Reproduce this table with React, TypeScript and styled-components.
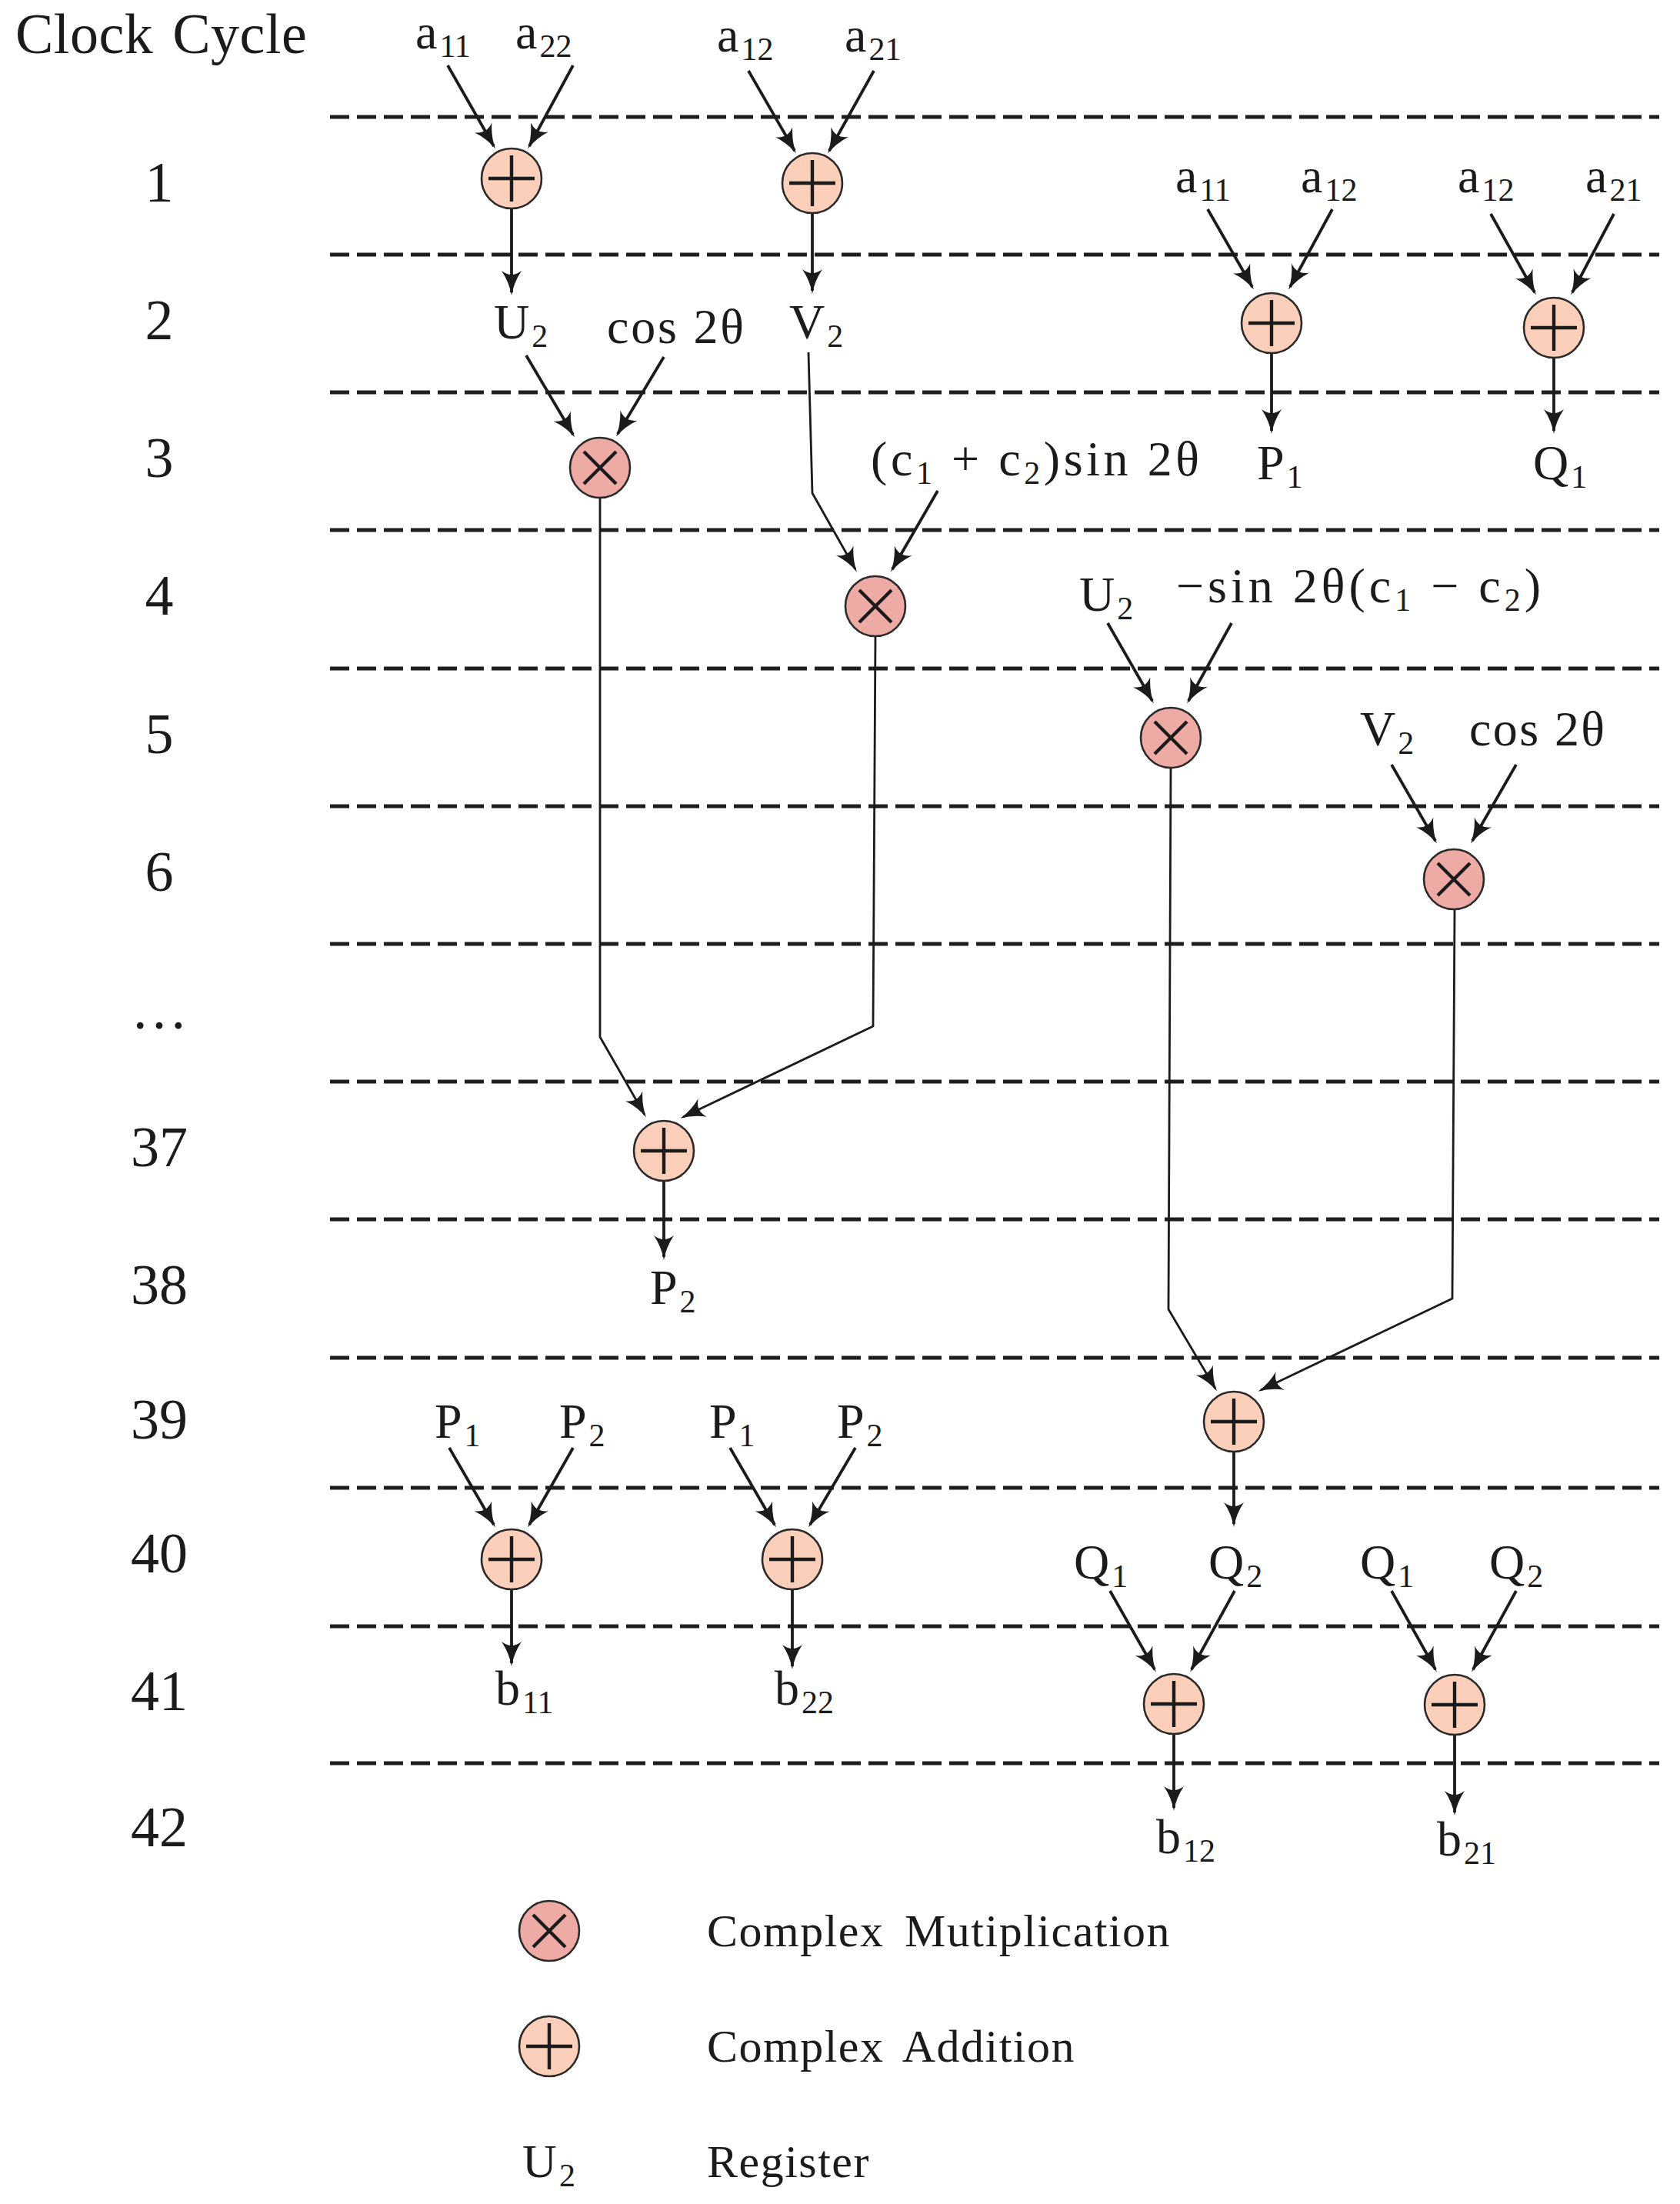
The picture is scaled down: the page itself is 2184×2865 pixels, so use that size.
import React from 'react';
import styled, { createGlobalStyle } from 'styled-components';

const INK = '#1b1b1b';

const GlobalStyle = createGlobalStyle`
	html,
	body {
		margin: 0;
		padding: 0;
		background: #ffffff;
	}

	body {
		font-family: 'Liberation Serif', 'DejaVu Serif', serif;
		color: ${INK};
	}
`;

// y of every dashed separator, top to bottom
const LINES = [152, 331, 510, 689, 869, 1048, 1227, 1406, 1585, 1765, 1934, 2114, 2292];
const CYCLES = ['1', '2', '3', '4', '5', '6', '…', '37', '38', '39', '40', '41', '42'];
const ROW_HEIGHTS = CYCLES.map((_, i) => (i < LINES.length - 1 ? LINES[i + 1] - LINES[i] : 176));

type Op = 'add' | 'mul';

const NODES: { id: string; op: Op; x: number; y: number }[] = [
	{ id: 'A', op: 'add', x: 665, y: 232 },
	{ id: 'B', op: 'add', x: 1056, y: 238 },
	{ id: 'C', op: 'add', x: 1653, y: 420 },
	{ id: 'D', op: 'add', x: 2020, y: 426 },
	{ id: 'E', op: 'mul', x: 780, y: 608 },
	{ id: 'F', op: 'mul', x: 1138, y: 788 },
	{ id: 'G', op: 'mul', x: 1522, y: 959 },
	{ id: 'H', op: 'mul', x: 1890, y: 1143 },
	{ id: 'I', op: 'add', x: 863, y: 1496 },
	{ id: 'J', op: 'add', x: 1604, y: 1848 },
	{ id: 'K', op: 'add', x: 665, y: 2027 },
	{ id: 'L', op: 'add', x: 1030, y: 2027 },
	{ id: 'M', op: 'add', x: 1526, y: 2215 },
	{ id: 'N', op: 'add', x: 1891, y: 2216 },
];

// short arrows: [x1, y1, x2, y2]
const ARROWS: number[][] = [
	[582, 85, 642, 190],
	[745, 85, 688, 190],
	[973, 92, 1033, 196],
	[1136, 92, 1078, 196],
	[665, 271, 665, 380],
	[1056, 277, 1056, 378],
	[684, 462, 745, 565],
	[863, 464, 803, 564],
	[1219, 638, 1160, 740],
	[1570, 272, 1628, 373],
	[1732, 272, 1677, 373],
	[1938, 278, 1995, 380],
	[2098, 278, 2044, 380],
	[1653, 459, 1653, 560],
	[2020, 465, 2020, 560],
	[1440, 810, 1498, 911],
	[1601, 810, 1545, 911],
	[1809, 994, 1866, 1093],
	[1971, 994, 1914, 1093],
	[863, 1535, 863, 1634],
	[584, 1882, 642, 1982],
	[745, 1882, 688, 1982],
	[949, 1882, 1007, 1982],
	[1112, 1882, 1053, 1982],
	[665, 2066, 665, 2162],
	[1030, 2066, 1030, 2166],
	[1604, 1887, 1604, 1981],
	[1443, 2068, 1501, 2170],
	[1605, 2068, 1549, 2170],
	[1809, 2068, 1866, 2170],
	[1971, 2068, 1915, 2170],
	[1526, 2254, 1526, 2350],
	[1891, 2255, 1891, 2356],
];

// long routed connections between stages
const ROUTES = [
	'M1051 458 L1056 641 L1112 740',
	'M780 647 L780 1348 L838 1449',
	'M1138 827 L1135 1334 L888 1452',
	'M1522 998 L1519 1702 L1580 1805',
	'M1891 1182 L1888 1688 L1639 1807',
];

const LABELS: { x: number; y: number; base: string; sub?: string }[] = [
	{ x: 540, y: 63, base: 'a', sub: '11' },
	{ x: 670, y: 63, base: 'a', sub: '22' },
	{ x: 932, y: 67, base: 'a', sub: '12' },
	{ x: 1098, y: 67, base: 'a', sub: '21' },
	{ x: 642, y: 440, base: 'U', sub: '2' },
	{ x: 1026, y: 440, base: 'V', sub: '2' },
	{ x: 1528, y: 250, base: 'a', sub: '11' },
	{ x: 1691, y: 250, base: 'a', sub: '12' },
	{ x: 1895, y: 250, base: 'a', sub: '12' },
	{ x: 2061, y: 250, base: 'a', sub: '21' },
	{ x: 1634, y: 623, base: 'P', sub: '1' },
	{ x: 1993, y: 623, base: 'Q', sub: '1' },
	{ x: 1403, y: 794, base: 'U', sub: '2' },
	{ x: 1768, y: 969, base: 'V', sub: '2' },
	{ x: 845, y: 1695, base: 'P', sub: '2' },
	{ x: 565, y: 1869, base: 'P', sub: '1' },
	{ x: 727, y: 1869, base: 'P', sub: '2' },
	{ x: 922, y: 1869, base: 'P', sub: '1' },
	{ x: 1088, y: 1869, base: 'P', sub: '2' },
	{ x: 644, y: 2216, base: 'b', sub: '11' },
	{ x: 1007, y: 2216, base: 'b', sub: '22' },
	{ x: 1396, y: 2052, base: 'Q', sub: '1' },
	{ x: 1571, y: 2052, base: 'Q', sub: '2' },
	{ x: 1768, y: 2052, base: 'Q', sub: '1' },
	{ x: 1936, y: 2052, base: 'Q', sub: '2' },
	{ x: 1503, y: 2409, base: 'b', sub: '12' },
	{ x: 1868, y: 2412, base: 'b', sub: '21' },
];

const SUB_DROP = 11;

const Page = styled.div`
	width: 2184px;
	min-height: 2865px;
	display: flex;
	flex-direction: column;
`;

const Figure = styled.div`
	display: grid;
	grid-template-columns: 414px 1770px;
`;

const CycleColumn = styled.div`
	display: flex;
	flex-direction: column;
`;

const CycleHeader = styled.div`
	height: 152px;
	box-sizing: border-box;
	padding: 7px 0 0 20px;
	font-size: 74px;
	line-height: 1;
	letter-spacing: 0.5px;
	white-space: nowrap;
	word-spacing: 6px;
`;

const CycleRow = styled.div<{ $h: number }>`
	height: ${(p) => p.$h}px;
	box-sizing: border-box;
	padding-bottom: 10px;
	display: flex;
	align-items: center;
	justify-content: center;
	font-size: 74px;
	line-height: 1;
`;

const Diagram = styled.svg`
	display: block;
	width: 1770px;
	height: 2468px;
`;

const Dash = styled.line`
	stroke: #1e1e1e;
	stroke-width: 4.8;
	stroke-dasharray: 25 10;
`;

const Wire = styled.path<{ $w?: number }>`
	fill: none;
	stroke: ${INK};
	stroke-width: ${(p) => p.$w ?? 3.8};
	stroke-linejoin: round;
`;

const Disc = styled.circle<{ $op: Op }>`
	fill: ${(p) => (p.$op === 'add' ? '#fbcfb9' : '#eeaaa5')};
	stroke: #2a2a2a;
	stroke-width: 2.6;
`;

const Stroke = styled.path`
	fill: none;
	stroke: ${INK};
	stroke-width: 4.4;
`;

const LabelText = styled.text`
	font-family: 'Liberation Serif', 'DejaVu Serif', serif;
	font-size: 64px;
	fill: ${INK};
`;

const Sub = styled.tspan`
	font-size: 42px;
`;

const Legend = styled.div`
	display: grid;
	grid-template-columns: 107px auto;
	grid-auto-rows: 84px;
	column-gap: 152px;
	row-gap: 66px;
	align-items: center;
	padding-left: 660px;
`;

const LegendIcon = styled.svg`
	display: block;
	width: 84px;
	height: 84px;
	justify-self: center;
`;

const LegendSymbol = styled.div`
	justify-self: center;
	font-size: 62px;
	line-height: 1;
	padding-top: 6px;

	sub {
		font-size: 42px;
		vertical-align: -12px;
		margin-left: 3px;
	}
`;

const LegendText = styled.div`
	font-size: 60px;
	line-height: 1;
	letter-spacing: 1.5px;
	word-spacing: 10px;
	white-space: nowrap;
`;

const OpGlyph = ({ op, x, y }: { op: Op; x: number; y: number }) => (
	<g>
		<Disc $op={op} cx={x} cy={y} r={39} />
		{op === 'add' ? (
			<Stroke d={`M${x - 30} ${y} H${x + 30} M${x} ${y - 30} V${y + 30}`} />
		) : (
			<Stroke d={`M${x - 21} ${y - 21} L${x + 21} ${y + 21} M${x + 21} ${y - 21} L${x - 21} ${y + 21}`} />
		)}
	</g>
);

const Label = ({ x, y, base, sub }: { x: number; y: number; base: string; sub?: string }) => (
	<LabelText x={x} y={y}>
		{base}
		{sub && (
			<Sub dx={3} dy={SUB_DROP}>
				{sub}
			</Sub>
		)}
	</LabelText>
);

const CosLabel = ({ x, y, len }: { x: number; y: number; len: number }) => (
	<LabelText x={x} y={y} textLength={len} lengthAdjust="spacing">
		cos 2θ
	</LabelText>
);

export default function App() {
	return (
		<>
			<GlobalStyle />
			<Page>
				<Figure>
					<CycleColumn>
						<CycleHeader>Clock Cycle</CycleHeader>
						{CYCLES.map((c, i) => (
							<CycleRow key={c} $h={ROW_HEIGHTS[i]}>
								{c}
							</CycleRow>
						))}
					</CycleColumn>

					<Diagram viewBox="414 0 1770 2468" xmlns="http://www.w3.org/2000/svg">
						<defs>
							<marker
								id="tip"
								viewBox="0 0 32 26"
								refX="28"
								refY="13"
								markerWidth="32"
								markerHeight="26"
								markerUnits="userSpaceOnUse"
								orient="auto"
							>
								<path d="M0 0 Q15 10 32 13 Q15 16 0 26 Q10 13 0 0 Z" fill={INK} />
							</marker>
						</defs>

						{LINES.map((y) => (
							<Dash key={y} x1={429} x2={2157} y1={y} y2={y} />
						))}

						{ROUTES.map((d) => (
							<Wire key={d} d={d} $w={2.8} markerEnd="url(#tip)" />
						))}

						{ARROWS.map(([x1, y1, x2, y2]) => (
							<Wire key={`${x1}-${y1}`} d={`M${x1} ${y1} L${x2} ${y2}`} markerEnd="url(#tip)" />
						))}

						{NODES.map((n) => (
							<OpGlyph key={n.id} op={n.op} x={n.x} y={n.y} />
						))}

						{LABELS.map((l) => (
							<Label key={`${l.x}-${l.y}`} {...l} />
						))}

						<CosLabel x={789} y={446} len={178} />
						<CosLabel x={1910} y={969} len={176} />

						<LabelText x={1132} y={618} textLength={427} lengthAdjust="spacing">
							(c
							<Sub dy={SUB_DROP}>1</Sub>
							<tspan dy={-SUB_DROP}> + c</tspan>
							<Sub dy={SUB_DROP}>2</Sub>
							<tspan dy={-SUB_DROP}>)sin 2θ</tspan>
						</LabelText>

						<LabelText x={1529} y={783} textLength={474} lengthAdjust="spacing">
							−sin 2θ(c
							<Sub dy={SUB_DROP}>1</Sub>
							<tspan dy={-SUB_DROP}> − c</tspan>
							<Sub dy={SUB_DROP}>2</Sub>
							<tspan dy={-SUB_DROP}>)</tspan>
						</LabelText>
					</Diagram>
				</Figure>

				<Legend>
					<LegendIcon viewBox="0 0 84 84">
						<OpGlyph op="mul" x={42} y={42} />
					</LegendIcon>
					<LegendText>Complex Mutiplication</LegendText>

					<LegendIcon viewBox="0 0 84 84">
						<OpGlyph op="add" x={42} y={42} />
					</LegendIcon>
					<LegendText>Complex Addition</LegendText>

					<LegendSymbol>
						U<sub>2</sub>
					</LegendSymbol>
					<LegendText>Register</LegendText>
				</Legend>
			</Page>
		</>
	);
}
